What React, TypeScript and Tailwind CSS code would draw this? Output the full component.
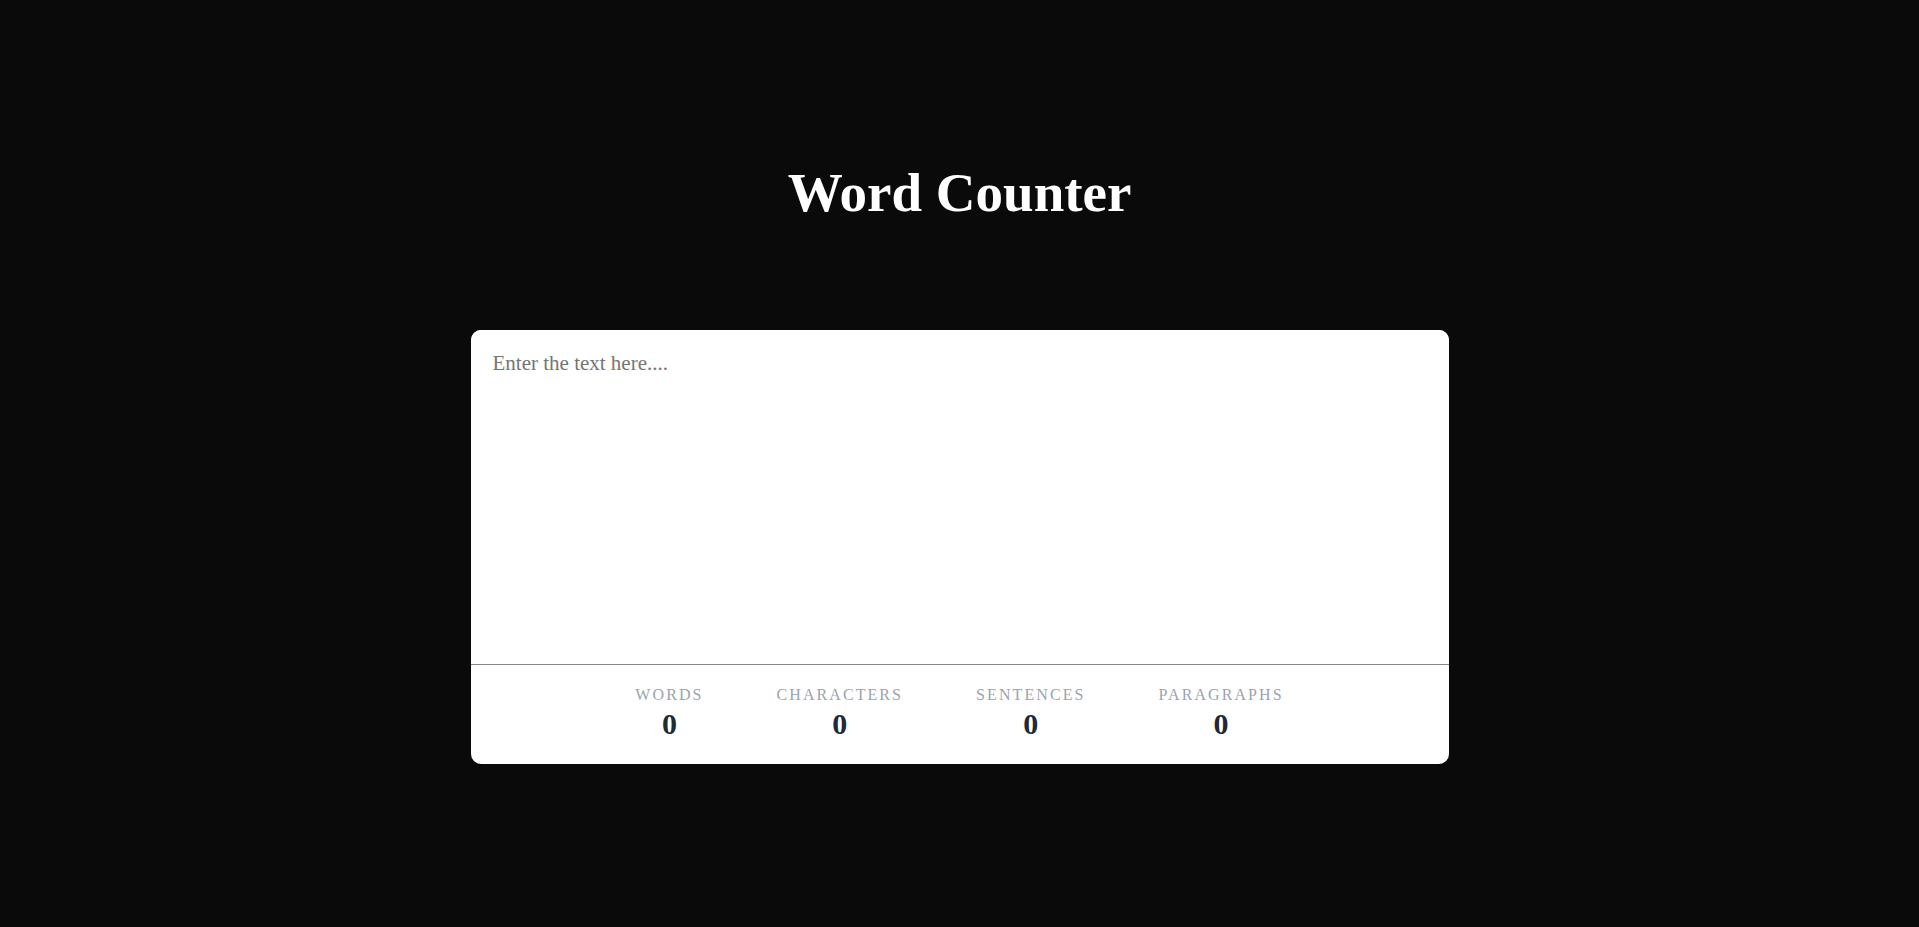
import { useState } from "react";

const stats = ["Words", "Characters", "Sentences", "Paragraphs"];

function countStats(text: string) {
  const trimmed = text.trim();
  return {
    Words: trimmed ? trimmed.split(/\s+/).length : 0,
    Characters: text.length,
    Sentences: trimmed ? trimmed.split(/[.!?]+/).filter((s) => s.trim()).length : 0,
    Paragraphs: trimmed ? trimmed.split(/\n+/).filter((p) => p.trim()).length : 0,
  } as Record<string, number>;
}

export default function App() {
  const [text, setText] = useState("");
  const counts = countStats(text);

  return (
    <div
      className="min-h-screen bg-[#0a0a0a] flex flex-col items-center pt-[165px]"
      style={{ fontFamily: '"Liberation Serif", "Times New Roman", serif' }}
    >
      <h1 className="text-[55px] leading-none font-bold text-white">Word Counter</h1>
      <div className="mt-[110px] w-[978px] rounded-[10px] bg-white overflow-hidden">
        <textarea
          value={text}
          onChange={(e) => setText(e.target.value)}
          placeholder="Enter the text here...."
          className="block w-full h-[334px] resize-none border-0 outline-none bg-white pt-[18px] px-[22px] text-[21px] text-[#1f2937] placeholder:text-[#757575]"
          style={{ fontFamily: '"Liberation Serif", "Times New Roman", serif' }}
        />
        <div className="h-[100px] border-t border-[#888888] pt-[21px] flex justify-center gap-[73px]">
          {stats.map((label) => (
            <div key={label} className="flex flex-col items-center">
              <div className="text-[16px] leading-[18px] uppercase tracking-[0.13em] text-[#9ca3af]">{label}</div>
              <div className="mt-[5px] text-[30px] leading-[30px] font-bold text-[#1f2937]">{counts[label]}</div>
            </div>
          ))}
        </div>
      </div>
    </div>
  );
}
